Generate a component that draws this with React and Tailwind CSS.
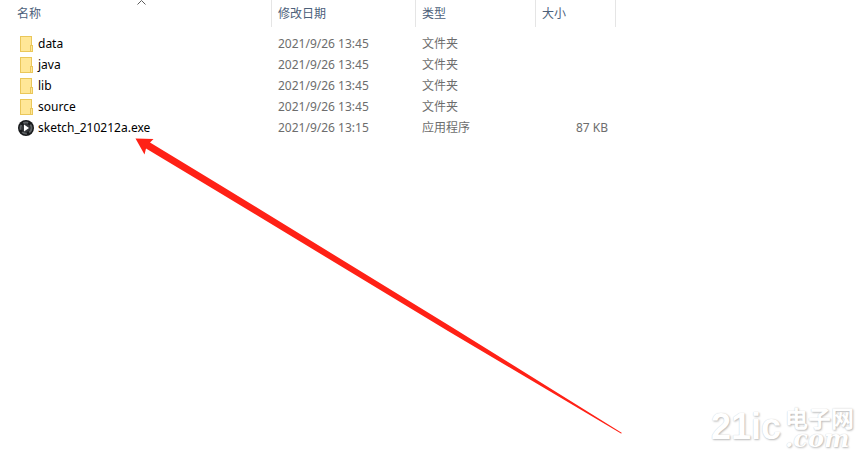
import { useState } from 'react';

const entries = [
  { name: 'data', modified: '2021/9/26 13:45', type: '文件夹', size: '', folder: true },
  { name: 'java', modified: '2021/9/26 13:45', type: '文件夹', size: '', folder: true },
  { name: 'lib', modified: '2021/9/26 13:45', type: '文件夹', size: '', folder: true },
  { name: 'source', modified: '2021/9/26 13:45', type: '文件夹', size: '', folder: true },
  { name: 'sketch_210212a.exe', modified: '2021/9/26 13:15', type: '应用程序', size: '87 KB', folder: false },
];

const columns = ['名称', '修改日期', '类型', '大小'];

function FolderIcon() {
  return (
    <svg width="16" height="16" viewBox="0 0 16 16" aria-hidden="true" className="shrink-0">
      <path d="M2 0h12v9h1v7H2z" fill="#eac75a" />
      <path d="M3 1h10v14H3z" fill="#ffe797" />
      <path d="M13 10h1v5h-1z" fill="#ffe797" />
      <path d="M12 9h1v6h-1z" fill="#eac75a" />
    </svg>
  );
}

function AppIcon() {
  return (
    <svg width="16" height="16" viewBox="0 0 16 16" aria-hidden="true" className="shrink-0">
      <circle cx="8" cy="8" r="8" fill="#17191b" />
      <circle cx="8" cy="8" r="5.5" fill="none" stroke="#5d6164" strokeWidth="2" strokeDasharray="5 2.5" />
      <circle cx="8" cy="8" r="4" fill="#34373a" />
      <path d="M6 4.5v7L11 8z" fill="#fff" />
    </svg>
  );
}

function SortMark({ descending }) {
  return (
    <svg width="9" height="5" viewBox="0 0 9 5" aria-hidden="true" className="absolute top-0 left-[137px]">
      <path d={descending ? 'M0.5 0.5l4 4 4-4' : 'M0.5 4.5l4-4 4 4'} fill="none" stroke="#5c5c5c" />
    </svg>
  );
}

function Arrow() {
  return (
    <svg
      width="488"
      height="296"
      viewBox="135 138 488 296"
      aria-hidden="true"
      className="pointer-events-none absolute top-[138px] left-[135px]"
    >
      <path
        d="M135.5 138.5L153.5 139 150 142.5 220 185 450 326 622 433 621 433.5 448 331 220 193 146 148.5 144.5 154.5z"
        fill="#ff2116"
      />
    </svg>
  );
}

function Watermark() {
  return (
    <div className="absolute right-2 bottom-1 flex items-center gap-1 text-white [text-shadow:1px_1px_2px_#bbb,0_0_1px_#ccc]">
      <span className="font-['Liberation_Sans',sans-serif] text-4xl font-bold">21ic</span>
      <span className="flex flex-col">
        <span className="font-['Noto_Sans_CJK_SC',sans-serif] text-[23px] leading-6 font-bold">电子网</span>
        <span className="font-['DejaVu_Serif',serif] text-2xl leading-5 font-bold italic">.com</span>
      </span>
    </div>
  );
}

export default function App() {
  const [descending, setDescending] = useState(false);
  const rows = descending ? [...entries].reverse() : entries;

  return (
    <main className="relative min-h-screen overflow-hidden bg-white font-['Noto_Sans','Noto_Sans_CJK_SC',sans-serif] text-xs text-[#6d6d6d]">
      <table className="w-full table-fixed border-separate border-spacing-0 text-left">
        <colgroup>
          <col className="w-[272px]" />
          <col className="w-36" />
          <col className="w-[120px]" />
          <col className="w-20" />
          <col />
        </colgroup>
        <thead>
          <tr>
            {columns.map((label, i) => (
              <th key={label} className="relative h-[27px] border-r border-[#e5e5e5] p-0 font-normal">
                {i === 0 && <SortMark descending={descending} />}
                <button
                  type="button"
                  onClick={() => setDescending(!descending)}
                  className={`block w-full text-left text-[#4c607a] ${i === 0 ? 'pl-[17px]' : 'pl-1.5'}`}
                >
                  {label}
                </button>
              </th>
            ))}
            <td />
          </tr>
        </thead>
        <tbody className="before:block before:h-1.5">
          {rows.map((entry) => (
            <tr key={entry.name} className="h-[21px]">
              <td className="p-0 pl-[18px]">
                <span className="flex items-center gap-1 text-black">
                  {entry.folder ? <FolderIcon /> : <AppIcon />}
                  {entry.name}
                </span>
              </td>
              <td className="p-0 pl-1.5">{entry.modified}</td>
              <td className="p-0 pl-1.5">{entry.type}</td>
              <td className="p-0 pr-2 text-right">{entry.size}</td>
              <td />
            </tr>
          ))}
        </tbody>
      </table>
      <Arrow />
      <Watermark />
    </main>
  );
}
